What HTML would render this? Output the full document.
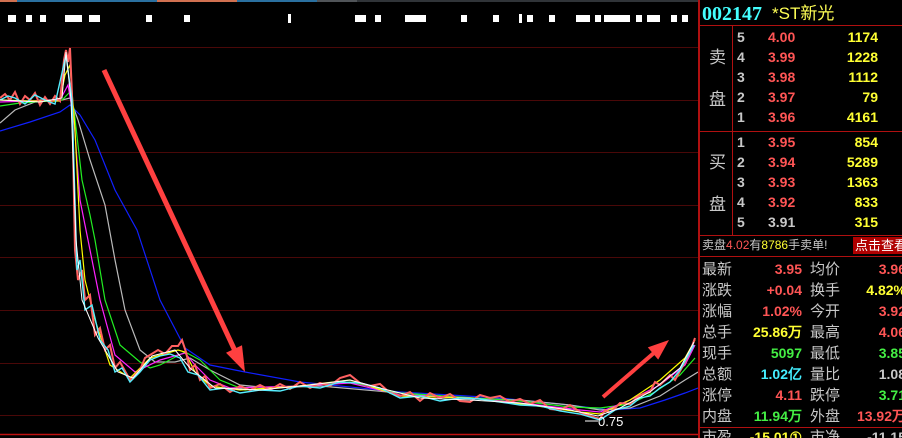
<!DOCTYPE html>
<html><head><meta charset="utf-8"><style>
*{margin:0;padding:0;box-sizing:border-box}
html,body{width:902px;height:438px;overflow:hidden}
body{background:#000;position:relative;font-family:"Liberation Sans","Noto Sans CJK SC",sans-serif}
.p{position:absolute;left:698px;top:0;width:204px;height:438px;border-left:2px solid #b01010;overflow:hidden}
.t{position:absolute;white-space:nowrap;font-size:15px;line-height:20px}
.hl{position:absolute;left:0;width:204px;height:1px;background:#b01010}
.w{color:#c8c8c8}.r{color:#ff5555}.y{color:#ffff33}.g{color:#44ee44}.c{color:#44eeff}
.n{font-weight:bold;font-family:"Liberation Sans",sans-serif;font-size:14px}
</style></head><body>
<svg width="698" height="438" style="position:absolute;left:0;top:0">
<rect x="0" y="0" width="17" height="2" fill="#d07050"/>
<rect x="17" y="0" width="140" height="2" fill="#2a70a0"/>
<rect x="157" y="0" width="80" height="2" fill="#d07050"/>
<rect x="237" y="0" width="80" height="2" fill="#2a70a0"/>
<rect x="317" y="0" width="40" height="2" fill="#505458"/>
<rect x="357" y="0" width="341" height="2" fill="#303438"/>
<g stroke="#4a0808" stroke-width="1">
<line x1="0" y1="47.5" x2="698" y2="47.5"/><line x1="0" y1="100.5" x2="698" y2="100.5"/>
<line x1="0" y1="152.5" x2="698" y2="152.5"/><line x1="0" y1="205.5" x2="698" y2="205.5"/>
<line x1="0" y1="257.5" x2="698" y2="257.5"/><line x1="0" y1="310.5" x2="698" y2="310.5"/>
<line x1="0" y1="363.5" x2="698" y2="363.5"/><line x1="0" y1="415.5" x2="698" y2="415.5"/>
</g>
<line x1="0" y1="434.5" x2="698" y2="434.5" stroke="#c01010" stroke-width="1.5"/>
<g fill="#fff">
<rect x="8" y="15" width="8" height="7"/><rect x="26" y="15" width="6" height="7"/><rect x="40" y="15" width="6" height="7"/>
<rect x="65" y="15" width="17" height="7"/><rect x="89" y="15" width="11" height="7"/><rect x="146" y="15" width="6" height="7"/>
<rect x="184" y="15" width="6" height="7"/><rect x="288" y="14" width="3" height="9"/>
<rect x="355" y="15" width="11" height="7"/><rect x="375" y="15" width="6" height="7"/><rect x="405" y="15" width="21" height="7"/>
<rect x="461" y="15" width="6" height="7"/><rect x="493" y="15" width="6" height="7"/><rect x="519" y="14" width="3" height="9"/>
<rect x="527" y="15" width="6" height="7"/><rect x="549" y="15" width="6" height="7"/><rect x="576" y="15" width="14" height="7"/>
<rect x="595" y="15" width="6" height="7"/><rect x="604" y="15" width="26" height="7"/><rect x="636" y="15" width="6" height="7"/>
<rect x="647" y="15" width="13" height="7"/><rect x="671" y="15" width="6" height="7"/><rect x="682" y="15" width="6" height="7"/>
</g>
<g fill="none" stroke-width="1.2">
<polyline stroke="#1020ff" points="0,131 30,122 60,112 70,105 80,115 95,140 115,190 137,230 160,300 185,348 210,365 245,372 300,382 400,392 500,398 560,404 610,410 640,408 665,400 685,393 698,388"/>
<polyline stroke="#bbbbbb" points="0,123 15,110 40,100 62,100 70,98 78,120 90,160 105,205 115,260 125,310 140,350 155,362 175,362 190,358 210,370 240,385 270,388 320,386 400,393 460,398 520,400 570,405 600,410 630,408 660,396 685,380 698,372"/>
<polyline stroke="#22ee22" points="0,106 20,103 50,101 62,100 70,92 74,110 82,180 90,215 95,240 105,300 120,345 140,362 150,368 160,365 185,352 200,360 220,380 245,390 300,386 350,382 400,393 460,397 520,401 570,407 600,408 630,404 655,392 680,375 695,358"/>
<polyline stroke="#ff22ff" points="0,102 30,101 60,100 68,85 74,120 80,200 88,240 100,300 115,355 135,372 160,360 185,353 195,365 210,380 230,388 300,386 350,383 400,395 470,398 530,404 580,410 600,412 630,400 660,385 685,365 695,345"/>
<polyline stroke="#ffff00" points="0,100 30,101 60,101 65,75 70,65 75,130 80,230 85,280 95,320 110,365 130,378 150,358 178,350 185,352 195,372 210,386 240,390 300,386 350,380 400,396 470,398 530,405 580,412 600,414 630,400 660,380 685,358 695,340"/>
<polyline stroke="#ff6060" stroke-width="2" points="0,98 5,94 10,100 15,92 20,104 25,96 30,100 35,93 40,105 45,97 50,104 55,96 60,101 64,60 66,50 68,62 70,48 72,95 75,250 78,280 82,270 85,300 90,295 95,335 100,328 105,350 110,345 115,368 120,362 130,380 140,370 145,358 150,355 158,350 165,354 172,346 178,346 182,340 186,352 190,370 195,365 200,380 205,376 210,388 220,384 230,392 240,386 250,390 260,385 270,390 280,384 290,389 300,382 310,388 320,383 330,386 340,378 350,375 360,383 370,386 380,384 390,393 400,396 410,392 420,401 430,393 440,398 450,394 460,401 470,402 480,395 490,398 500,396 510,402 520,399 530,404 540,400 550,409 560,410 570,405 580,412 590,416 600,419 605,410 610,413 620,403 630,404 640,395 650,392 655,382 660,385 670,375 675,380 685,362 690,352 695,338"/>
<polyline stroke="#55eeff" stroke-width="1.4" points="0,100 8,96 15,98 25,104 35,95 45,100 55,104 66,55 72,100 77,270 80,260 85,310 92,305 100,340 108,350 115,372 122,368 130,382 140,372 150,360 160,356 170,354 180,358 188,372 198,375 210,390 225,388 240,393 260,390 280,391 300,386 320,388 340,382 360,383 380,388 400,398 420,396 440,401 460,398 480,399 500,402 520,405 540,406 560,411 580,414 600,420 615,410 630,406 640,398 650,396 660,388 670,382 680,370 694,345"/>
<polyline stroke="#ffffff" stroke-width="1" points="0,100 40,102 62,98 66,52 71,100 76,240 82,300 98,338 118,372 133,378 152,356 175,350 190,368 215,388 260,390 310,385 350,380 380,388 420,398 470,400 520,403 570,410 598,416 620,408 650,392 680,368 694,342"/>
</g>
<g fill="#ff4040">
<polygon points="101.7,71.05 106.3,68.95 238.3,351.95 233.7,354.05"/>
<polygon points="226,352.8 242,345.2 245,372"/>
<polygon points="601.7,395.5 604.3,398.5 656.3,353.5 653.7,350.5"/>
<polygon points="647.8,347.4 658.2,359.6 669,340"/>
</g>
<line x1="585" y1="421" x2="598" y2="421" stroke="#fff"/>
<text x="598" y="426" fill="#fff" font-size="13" font-family="Liberation Sans">0.75</text>
</svg>
<div class="p">
<div class="t" style="left:2px;top:4px;font-size:20px;font-weight:bold;color:#44ffff;font-family:'Liberation Serif',serif">002147</div>
<div class="t" style="left:72px;top:4px;font-size:17px;color:#ffff55">*ST新光</div>
<div class="hl" style="top:25px"></div>
<div style="position:absolute;left:32px;top:26px;width:1px;height:209px;background:#b01010"></div>
<div class="hl" style="top:131px"></div>
<div class="hl" style="top:235px"></div>
<div class="t w" style="left:9px;top:48px;font-size:17px">卖</div>
<div class="t w" style="left:9px;top:90px;font-size:17px">盘</div>
<div class="t w" style="left:9px;top:153px;font-size:17px">买</div>
<div class="t w" style="left:9px;top:195px;font-size:17px">盘</div>
<div class="t w n" style="left:37px;top:27px">5<br>4<br>3<br>2<br>1</div>
<div class="t r n" style="left:68px;top:27px">4.00<br>3.99<br>3.98<br>3.97<br>3.96</div>
<div class="t y n" style="left:130px;top:27px;width:48px;text-align:right">1174<br>1228<br>1112<br>79<br>4161</div>
<div class="t w n" style="left:37px;top:132px">1<br>2<br>3<br>4<br>5</div>
<div class="t r n" style="left:68px;top:132px">3.95<br>3.94<br>3.93<br>3.92<br><span class="w">3.91</span></div>
<div class="t y n" style="left:130px;top:132px;width:48px;text-align:right">854<br>5289<br>1363<br>833<br>315</div>
<div class="t w" style="left:2px;top:237px;font-size:12px;line-height:16px">卖盘<span class="r">4.02</span>有<span class="y">8786</span>手卖单!</div>
<div style="position:absolute;left:153px;top:237px;width:51px;height:17px;background:#b00000"></div>
<div class="t" style="left:155px;top:237px;font-size:13px;line-height:17px;color:#fff">点击查看</div>
<div class="hl" style="top:256px"></div>
<div class="t w" style="left:2px;top:259px;font-size:15px;line-height:21px">最新<br>涨跌<br>涨幅<br>总手<br>现手<br>总额<br>涨停<br>内盘<br>市盈</div>
<div class="t n" style="left:30px;top:259px;width:72px;text-align:right;line-height:21px"><span class="r">3.95</span><br><span class="r">+0.04</span><br><span class="r">1.02%</span><br><span class="y">25.86万</span><br><span class="g">5097</span><br><span class="c">1.02亿</span><br><span class="r">4.11</span><br><span class="g">11.94万</span><br><span class="y">-15.01①</span></div>
<div class="t w" style="left:110px;top:259px;font-size:15px;line-height:21px">均价<br>换手<br>今开<br>最高<br>最低<br>量比<br>跌停<br>外盘<br>市净</div>
<div class="t n" style="left:140px;top:259px;width:66px;text-align:right;line-height:21px"><span class="r">3.96</span><br><span class="y">4.82%</span><br><span class="r">3.92</span><br><span class="r">4.06</span><br><span class="g">3.85</span><br><span class="w">1.08</span><br><span class="g">3.71</span><br><span class="r">13.92万</span><br><span class="w">-11.15</span></div>
<div class="hl" style="top:427px"></div>
</div>
</body></html>
